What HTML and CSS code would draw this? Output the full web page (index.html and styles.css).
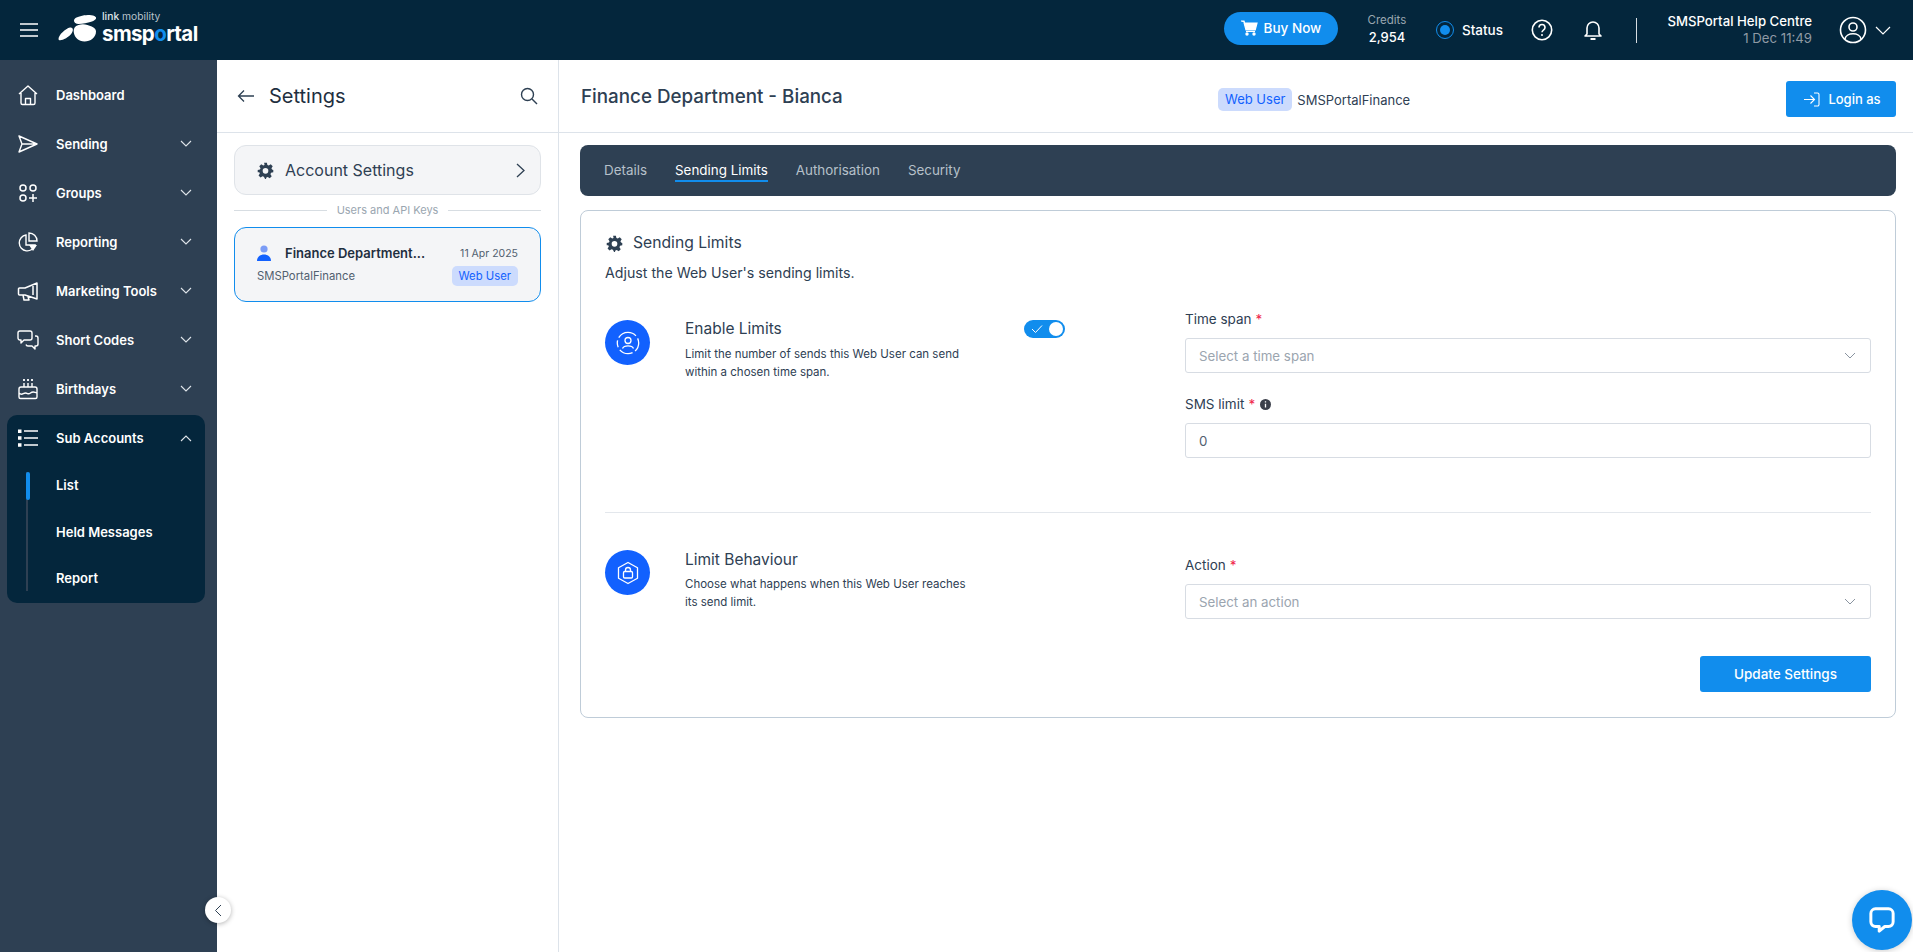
FILE: index.html
```html
<!DOCTYPE html>
<html lang="en">
<head>
<meta charset="utf-8">
<title>Settings</title>
<link rel="stylesheet" href="styles.css">
</head>
<body>
<header class="topbar">
  <svg class="burger" width="18" height="14" viewBox="0 0 18 14"><path d="M0 1h18M0 7h18M0 13h18" stroke="#fff" stroke-width="1.500" fill="none"/></svg>
  <div class="logo">
    <svg class="logo-mark" width="40" height="27" viewBox="0 0 40 27"><path d="M.5 24c0-4 7-10.500 11.500-11.500 3.500-.5 3.500 3 1.500 6-3 4.500-13 9-13 5.500zM17 3.500C20 1 30-1 35 .5c5 1.500 3.500 4.500-1 6-5 1.500-9 2.500-13.500 2.500-3.500 0-6-3-3.500-5.500zM17 12c3-3 8.500-3.500 12.500-2 3.500 1 8.500 2.500 8.500 6.500 0 6-5.500 10-11.500 10-6 0-9.500-4-10.500-8-.5-2.500-.5-4.500 1-6.500z" fill="#fff"/></svg>
    <div class="logo-text">
      <span class="logo-top"><b>link</b> mobility</span>
      <span class="logo-main">smsp<i>o</i>rtal</span>
    </div>
  </div>
  <div class="top-right">
    <button class="buy"><svg width="17" height="16" viewBox="0 0 17 16"><path d="M0 1h3l.6 2H16l-1.800 7H5L3 2.500M5 11.500h9" fill="#fff" stroke="#fff" stroke-width="1.200"/><circle cx="6" cy="14" r="1.700" fill="#fff"/><circle cx="13" cy="14" r="1.700" fill="#fff"/></svg>Buy Now</button>
    <div class="credits"><span>Credits</span><strong>2,954</strong></div>
    <div class="status"><span class="status-dot"><i></i></span>Status</div>
    <svg class="help" width="22" height="22" viewBox="0 0 22 22"><circle cx="11" cy="11" r="9.700" fill="none" stroke="#fff" stroke-width="1.600"/><path d="M8 8.500c0-4 6-4 6 0 0 2.500-3 2.500-3 4.700" fill="none" stroke="#fff" stroke-width="1.600"/><circle cx="11" cy="16" r="1" fill="#fff"/></svg>
    <svg class="bell" width="20" height="22" viewBox="0 0 20 22"><path d="M4 15V9a6 6 0 0 1 12 0v6l2 2H2z" fill="none" stroke="#fff" stroke-width="1.600" stroke-linejoin="round"/><path d="M7.500 20h5" stroke="#fff" stroke-width="2"/></svg>
    <span class="top-div"></span>
    <div class="help-centre"><strong>SMSPortal Help Centre</strong><span>1 Dec 11:49</span></div>
    <svg class="avatar" width="28" height="28" viewBox="0 0 28 28"><circle cx="14" cy="14" r="12.500" fill="none" stroke="#fff" stroke-width="1.600"/><circle cx="14" cy="11" r="4" fill="none" stroke="#fff" stroke-width="1.600"/><path d="M6 23c1-7 15-7 16 0" fill="none" stroke="#fff" stroke-width="1.600"/></svg>
    <svg class="avatar-chev" width="16" height="9" viewBox="0 0 16 9"><path d="M1 1l7 7 7-7" fill="none" stroke="#fff" stroke-width="1.200"/></svg>
  </div>
</header>

<div class="layout">
  <nav class="sidebar">
    <a class="nav-item"><svg width="22" height="22" viewBox="0 0 22 22"><path d="M2 10l9-8 9 8M4 8v11a1.500 1.500 0 0 0 1.500 1.500h11A1.500 1.500 0 0 0 18 19V8M8.500 20.500v-6h5v6" fill="none" stroke="#fff" stroke-width="1.400" stroke-linejoin="round"/></svg><span>Dashboard</span></a>
    <a class="nav-item"><svg width="22" height="22" viewBox="0 0 22 22"><path d="M2 3l18 8-18 8 3-8zM5 11h15" fill="none" stroke="#fff" stroke-width="1.400" stroke-linejoin="round"/></svg><span>Sending</span><svg class="chev" width="12" height="7" viewBox="0 0 12 7"><path d="M1 1l5 5 5-5" fill="none" stroke="#dfe5ea" stroke-width="1.100"/></svg></a>
    <a class="nav-item"><svg width="22" height="22" viewBox="0 0 22 22"><g fill="none" stroke="#fff" stroke-width="1.500"><circle cx="6" cy="6" r="3"/><circle cx="16" cy="6" r="3"/><circle cx="6" cy="16" r="3"/><path d="M16 12v8M12 16h8"/></g></svg><span>Groups</span><svg class="chev" width="12" height="7" viewBox="0 0 12 7"><path d="M1 1l5 5 5-5" fill="none" stroke="#dfe5ea" stroke-width="1.100"/></svg></a>
    <a class="nav-item"><svg width="22" height="22" viewBox="0 0 22 22"><path d="M9 4a8 8 0 1 0 9 10H9z" fill="none" stroke="#fff" stroke-width="1.400"/><path d="M12 2a8 8 0 0 1 8 8h-8z" fill="none" stroke="#fff" stroke-width="1.400"/><path d="M12 14h8l-4 6z" fill="#fff"/></svg><span>Reporting</span><svg class="chev" width="12" height="7" viewBox="0 0 12 7"><path d="M1 1l5 5 5-5" fill="none" stroke="#dfe5ea" stroke-width="1.100"/></svg></a>
    <a class="nav-item"><svg width="22" height="22" viewBox="0 0 22 22"><path d="M20 3v16L8 15H2.500a1 1 0 0 1-1-1V9a1 1 0 0 1 1-1H8zM6 15l1 5h5l-1-3.500M16 6v9" fill="none" stroke="#fff" stroke-width="1.500" stroke-linejoin="round"/></svg><span>Marketing Tools</span><svg class="chev" width="12" height="7" viewBox="0 0 12 7"><path d="M1 1l5 5 5-5" fill="none" stroke="#dfe5ea" stroke-width="1.100"/></svg></a>
    <a class="nav-item"><svg width="22" height="22" viewBox="0 0 22 22"><path d="M3 2h10a2 2 0 0 1 2 2v5a2 2 0 0 1-2 2H7l-3 3v-3H3a2 2 0 0 1-2-2V4a2 2 0 0 1 2-2zM18 7h1a2 2 0 0 1 2 2v6a2 2 0 0 1-2 2h-1v3l-3-3h-4a2 2 0 0 1-2-1.500" fill="none" stroke="#fff" stroke-width="1.400" stroke-linejoin="round"/></svg><span>Short Codes</span><svg class="chev" width="12" height="7" viewBox="0 0 12 7"><path d="M1 1l5 5 5-5" fill="none" stroke="#dfe5ea" stroke-width="1.100"/></svg></a>
    <a class="nav-item"><svg width="22" height="22" viewBox="0 0 22 22"><path d="M4 9h14a2 2 0 0 1 2 2v8a1.500 1.500 0 0 1-1.500 1.500h-15A1.500 1.500 0 0 1 2 19v-8a2 2 0 0 1 2-2zM2 15c3 3 4 0 6.500 0s2.500 2 5 0 3-1 6.500 0M7 5v4M11 5v4M15 5v4" fill="none" stroke="#fff" stroke-width="1.400"/><path d="M7 1v2M11 1v2M15 1v2" stroke="#fff" stroke-width="1.800"/></svg><span>Birthdays</span><svg class="chev" width="12" height="7" viewBox="0 0 12 7"><path d="M1 1l5 5 5-5" fill="none" stroke="#dfe5ea" stroke-width="1.100"/></svg></a>
    <div class="nav-group">
      <a class="nav-item nav-group-head"><svg width="22" height="22" viewBox="0 0 22 22"><path d="M7 4h14M7 11h14M7 18h14" stroke="#fff" stroke-width="1.400"/><path d="M1 2.500h3.500V6H1zM1 9.300h3.500v3.500H1zM1 16.200h3.500v3.500H1z" fill="#fff"/></svg><span>Sub Accounts</span><svg class="chev" width="12" height="7" viewBox="0 0 12 7"><path d="M1 6l5-5 5 5" fill="none" stroke="#dfe5ea" stroke-width="1.100"/></svg></a>
      <div class="sub-list">
        <a class="sub-item active">List</a>
        <a class="sub-item">Held Messages</a>
        <a class="sub-item">Report</a>
      </div>
    </div>
  </nav>

  <aside class="panel">
    <div class="panel-head">
      <svg width="18" height="14" viewBox="0 0 18 14"><path d="M17 7H1.500M7 1.500L1.500 7 7 12.500" fill="none" stroke="#2e4053" stroke-width="1.300"/></svg>
      <h2>Settings</h2>
      <svg class="panel-search" width="18" height="18" viewBox="0 0 18 18"><circle cx="7.500" cy="7.500" r="6" fill="none" stroke="#2e4053" stroke-width="1.400"/><path d="M12 12l5 5" stroke="#2e4053" stroke-width="1.400"/></svg>
    </div>
    <div class="panel-body">
      <div class="account-btn">
        <svg class="gear" width="17" height="17" viewBox="0 0 24 24"><path fill="#2e4053" fill-rule="evenodd" d="M10 1h4l.7 3.200 1.900.8 2.800-1.800 2.800 2.800-1.800 2.800.8 1.900L23 11.400v3.200l-3.200.7-.8 1.900 1.800 2.800-2.800 2.800-2.800-1.800-1.900.8L12.600 24h-1.200l-1.700-3.200-1.900-.8-2.800 1.800-2.800-2.800 1.800-2.800-.8-1.900L1 14.600v-3.200l3.200-.7.800-1.900L3.200 6l2.800-2.800 2.800 1.800 1.900-.8zM12 8.500a4 4 0 1 0 0 8 4 4 0 0 0 0-8z"/></svg>
        <span>Account Settings</span>
        <svg class="account-chev" width="9" height="15" viewBox="0 0 9 15"><path d="M1 1l7 6.500L1 14" fill="none" stroke="#2e4053" stroke-width="1.300"/></svg>
      </div>
      <div class="divider-label"><span>Users and API Keys</span></div>
      <div class="user-card">
        <div class="user-top">
          <svg width="14" height="16" viewBox="0 0 14 16"><circle cx="7" cy="4" r="3.600" fill="#7b9cf6"/><path d="M0 16c0-4 3-6.500 7-6.500s7 2.500 7 6.500z" fill="#1261fe"/></svg>
          <strong>Finance Department...</strong>
          <span class="user-date">11 Apr 2025</span>
        </div>
        <div class="user-bottom">
          <span>SMSPortalFinance</span>
          <em class="badge">Web User</em>
        </div>
      </div>
    </div>
  </aside>

  <main class="main">
    <div class="main-head">
      <h1>Finance Department - Bianca</h1>
      <div class="main-meta"><em class="badge badge-lg">Web User</em><span>SMSPortalFinance</span></div>
      <button class="login-as"><svg width="17" height="15" viewBox="0 0 17 15"><path d="M1 7.500h10M7.500 3.500l4 4-4 4M11 1h3.500a1.500 1.500 0 0 1 1.500 1.500v10a1.500 1.500 0 0 1-1.500 1.500H11" fill="none" stroke="#fff" stroke-width="1.100"/></svg>Login as</button>
    </div>
    <div class="main-body">
      <div class="tabs">
        <a>Details</a>
        <a class="active">Sending Limits</a>
        <a>Authorisation</a>
        <a>Security</a>
      </div>
      <section class="card">
        <h3 class="card-title"><svg width="17" height="17" viewBox="0 0 24 24"><path fill="#2e4053" fill-rule="evenodd" d="M10 1h4l.7 3.200 1.900.8 2.800-1.800 2.800 2.800-1.800 2.800.8 1.900L23 11.400v3.200l-3.200.7-.8 1.900 1.800 2.800-2.800 2.800-2.800-1.800-1.900.8L12.600 24h-1.200l-1.700-3.200-1.900-.8-2.800 1.800-2.800-2.800 1.800-2.800-.8-1.900L1 14.600v-3.200l3.200-.7.800-1.900L3.200 6l2.800-2.800 2.800 1.800 1.900-.8zM12 8.500a4 4 0 1 0 0 8 4 4 0 0 0 0-8z"/></svg>Sending Limits</h3>
        <p class="card-sub">Adjust the Web User's sending limits.</p>

        <div class="form-row">
          <div class="circle-icon"><svg width="24" height="24" viewBox="0 0 24 24"><circle cx="12" cy="12" r="10.700" fill="none" stroke="#fff" stroke-width="1.300" stroke-dasharray="9 3 14 3 7 3 20 3"/><circle cx="12" cy="9.500" r="3" fill="none" stroke="#fff" stroke-width="1.300"/><path d="M6.500 17.500c1.500-3.500 9.500-3.500 11 0" fill="none" stroke="#fff" stroke-width="1.300"/></svg></div>
          <div class="form-info">
            <h4>Enable Limits</h4>
            <p>Limit the number of sends this Web User can send within a chosen time span.</p>
          </div>
          <div class="toggle"><svg width="12" height="10" viewBox="0 0 12 10"><path d="M1 5l3.500 3.500L11 1.500" fill="none" stroke="#fff" stroke-width="1"/></svg><i></i></div>
          <div class="form-fields">
            <label>Time span <b>*</b></label>
            <div class="control"><span class="placeholder">Select a time span</span><svg width="12" height="7" viewBox="0 0 12 7"><path d="M1 1l5 5 5-5" fill="none" stroke="#8a94a0" stroke-width="1"/></svg></div>
            <label class="label-gap">SMS limit <b>*</b> <svg class="info" width="11" height="11" viewBox="0 0 11 11"><circle cx="5.500" cy="5.500" r="5.500" fill="#3b3f4a"/><path d="M5.500 4.800v3.600M5.500 2.300v1.200" stroke="#fff" stroke-width="1.300"/></svg></label>
            <div class="control"><span>0</span></div>
          </div>
        </div>

        <hr class="form-sep">

        <div class="form-row form-row-up">
          <div class="circle-icon"><svg width="24" height="24" viewBox="0 0 24 24"><path d="M12 1.500l9.500 5.300v10.400L12 22.500l-9.500-5.300V6.800z" fill="none" stroke="#fff" stroke-width="1.300" stroke-linejoin="round"/><rect x="7.500" y="10.500" width="9" height="6.500" rx="1.200" fill="none" stroke="#fff" stroke-width="1.300"/><path d="M9.500 10.500V9a2.500 2.500 0 0 1 5 0v1.500" fill="none" stroke="#fff" stroke-width="1.300"/></svg></div>
          <div class="form-info">
            <h4>Limit Behaviour</h4>
            <p>Choose what happens when this Web User reaches its send limit.</p>
          </div>
          <div class="toggle-slot"></div>
          <div class="form-fields">
            <label>Action <b>*</b></label>
            <div class="control"><span class="placeholder">Select an action</span><svg width="12" height="7" viewBox="0 0 12 7"><path d="M1 1l5 5 5-5" fill="none" stroke="#8a94a0" stroke-width="1"/></svg></div>
          </div>
        </div>

        <div class="card-actions"><button class="update">Update Settings</button></div>
      </section>
    </div>
  </main>
</div>

<button class="collapse" aria-label="Collapse"><svg width="8" height="13" viewBox="0 0 8 13"><path d="M7 1L1.500 6.500 7 12" fill="none" stroke="#2e4053" stroke-width="1"/></svg></button>
<button class="chat" aria-label="Chat"><svg width="26" height="26" viewBox="0 0 28 28"><path d="M7 2h14a5 5 0 0 1 5 5v9a5 5 0 0 1-5 5h-4l-6 5v-5H7a5 5 0 0 1-5-5V7a5 5 0 0 1 5-5z" fill="none" stroke="#fff" stroke-width="3.200" stroke-linejoin="round"/></svg></button>
</body>
</html>
```

FILE: styles.css
```css
* { box-sizing: border-box; }
html, body { margin: 0; height: 100%; overflow: hidden; }
body { font-family: "Inter", "Liberation Sans", sans-serif; color: #2e4053; background: #fff; display: flex; flex-direction: column; }
h1, h2, h3, h4, p { margin: 0; font-weight: 400; }
em, i { font-style: normal; }
button { font-family: inherit; border: 0; cursor: pointer; }

.topbar { height: 60px; flex: none; background: #04263c; display: flex; align-items: center; color: #fff; }
.burger { margin-left: 20px; }
.logo { display: flex; align-items: center; margin-left: 20px; margin-bottom: 4px; }
.logo-mark { margin-right: 4px; }
.logo-text { display: flex; flex-direction: column; }
.logo-top { font-size: 10.300px; line-height: 12px; color: #b9c3cb; }
.logo-top b { font-weight: 500; color: #dfe5ea; }
.logo-main { font-size: 20.500px; line-height: 24px; font-weight: 700; letter-spacing: -.6px; }
.logo-main i { color: #118ded; }

.top-right { margin-left: auto; display: flex; align-items: center; }
.buy { width: 114px; height: 33px; margin-bottom: 4px; border-radius: 17px; background: #118ded; color: #fff; font-size: 13.500px; font-weight: 500; display: flex; align-items: center; justify-content: center; gap: 6px; padding: 0; }
.credits { margin-left: 29px; width: 40px; display: flex; flex-direction: column; align-items: center; }
.credits span { font-size: 11.500px; line-height: 14px; color: #9aa6b0; }
.credits strong { font-size: 13px; line-height: 20px; font-weight: 500; }
.status { margin-left: 29px; margin-bottom: 1px; display: flex; align-items: center; font-size: 13.500px; font-weight: 500; }
.status-dot { width: 18px; height: 18px; border: 1.500px solid #118ded; border-radius: 50%; display: flex; align-items: center; justify-content: center; margin-right: 8px; }
.status-dot i { width: 10px; height: 10px; border-radius: 50%; background: #118ded; }
.help { margin-left: 28px; }
.bell { margin-left: 30px; }
.top-div { width: 1px; height: 25px; background: #d7dde2; margin-left: 33px; }
.help-centre { margin-left: 30px; width: 145px; display: flex; flex-direction: column; align-items: flex-end; }
.help-centre strong { font-size: 13.200px; line-height: 17px; font-weight: 500; white-space: nowrap; }
.help-centre span { font-size: 13.200px; line-height: 17px; color: #8f9aa5; }
.avatar { margin-left: 27px; }
.avatar-chev { margin-left: 8px; margin-right: 22px; }

.layout { flex: 1; display: flex; min-height: 0; }
.sidebar { width: 217px; flex: none; background: #2e4053; padding-top: 10px; }
.nav-item { height: 49px; display: flex; align-items: center; padding: 0 25px 0 17px; color: #fff; font-size: 13px; font-weight: 600; }
.nav-item > span { margin-left: 17px; flex: 1; }
.nav-group { margin: 2px 12px 0 7px; height: 188px; background: #04263c; border-radius: 10px; }
.nav-group-head { height: 46px; padding: 0 13px 0 10px; }
.sub-list { margin: 1px 0 0 19px; position: relative; display: flex; flex-direction: column; padding-left: 30px; }
.sub-list::before { content: ""; position: absolute; left: 0; top: 10px; bottom: 11px; width: 2px; background: #2e4053; }
.sub-item { height: 46.500px; display: flex; align-items: center; color: #fff; font-size: 13px; font-weight: 600; position: relative; }
.sub-item.active::before { content: ""; position: absolute; left: -30.500px; top: 10px; width: 4px; height: 28px; border-radius: 2px; background: #118ded; }

.panel { width: 342px; flex: none; border-right: 1px solid #dde3ea; }
.panel-head { height: 73px; border-bottom: 1px solid #dde3ea; display: flex; align-items: center; padding: 0 20px 0 20px; }
.panel-head h2 { font-size: 20px; font-weight: 400; margin-left: 14px; color: #1f2f3f; }
.panel-search { margin-left: auto; }
.panel-body { padding: 12px 17px 0 17px; }
.account-btn { height: 50px; background: #f4f5f7; border: 1px solid #dfe3e8; border-radius: 12px; display: flex; align-items: center; padding: 0 15px 0 22px; font-size: 16px; }
.account-btn span { margin-left: 11px; flex: 1; }
.divider-label { display: flex; align-items: center; gap: 10px; margin-top: 6px; height: 18px; font-size: 11px; color: #9aa6b0; }
.divider-label::before, .divider-label::after { content: ""; flex: 1; height: 1px; background: #d7dde2; }
.user-card { margin-top: 8px; height: 75px; background: #f4f5f7; border: 1px solid #118ded; border-radius: 12px; padding: 15px 22px 0 22px; }
.user-top { display: flex; align-items: center; height: 20px; }
.user-top strong { margin-left: 14px; font-size: 13px; font-weight: 600; flex: 1; color: #1f2f3f; white-space: nowrap; }
.user-date { font-size: 10.500px; color: #51606f; }
.user-bottom { display: flex; justify-content: space-between; align-items: center; margin-top: 3px; font-size: 11.300px; color: #51606f; }
.badge { background: #ccdbfd; color: #1261fe; border-radius: 5px; font-size: 11.300px; height: 20px; line-height: 20px; padding: 0 7px; }
.badge-lg { font-size: 13px; height: 23px; line-height: 23px; padding: 0 7px; }

.main { flex: 1; min-width: 0; }
.main-head { height: 73px; border-bottom: 1px solid #dde3ea; display: flex; align-items: center; padding: 0 17px 0 22px; }
.main-head h1 { font-size: 18.800px; font-weight: 500; color: #2e4053; width: 637px; white-space: nowrap; }
.main-meta { display: flex; align-items: center; gap: 5px; margin-top: 7px; font-size: 13px; }
.login-as { margin-left: auto; margin-top: 6px; width: 110px; height: 36px; border-radius: 3px; background: #118ded; color: #fff; font-size: 13px; font-weight: 500; display: flex; align-items: center; justify-content: center; gap: 8px; padding: 0 0 0 2px; }
.main-body { padding: 12px 17px 0 21px; }
.tabs { height: 51px; background: #2e4053; border-radius: 8px; display: flex; align-items: center; padding-left: 24px; gap: 28px; font-size: 13.400px; color: #b6c0ca; }
.tabs a { height: 23px; line-height: 22px; }
.tabs a.active { color: #fff; border-bottom: 2px solid #118ded; }
.card { margin-top: 14px; height: 508px; border: 1px solid #bfccd8; border-radius: 8px; padding: 20px 24px 0 24px; }
.card-title { display: flex; align-items: center; gap: 10px; font-size: 15.700px; line-height: 24px; padding-left: 1px; }
.card-sub { margin-top: 6px; font-size: 14.200px; line-height: 24px; }
.form-row { display: grid; grid-template-columns: 45px 304px 41px 1fr; column-gap: 35px; margin-top: 24px; }
.form-sep + .form-row { margin-top: 42px; }
.circle-icon { width: 45px; height: 45px; margin-top: 11px; border-radius: 50%; background: #1261fe; display: flex; align-items: center; justify-content: center; }
.form-info { padding-top: 10px; }
.form-info h4 { font-size: 15.500px; line-height: 20px; }
.form-info p { margin-top: 6px; max-width: 282px; font-size: 11.500px; line-height: 18px; }
.form-row-up .circle-icon { margin-top: -5px; }
.form-row-up .form-info { padding-top: 0; margin-top: -5px; }
.form-row-up .form-info p { margin-top: 5px; }
.toggle { width: 41px; height: 18px; margin-top: 11px; border-radius: 9px; background: #118ded; display: flex; align-items: center; justify-content: space-between; padding: 0 2px 0 7px; }
.toggle i { width: 14px; height: 14px; border-radius: 50%; background: #fff; }
.form-fields { margin-left: 85px; min-width: 0; }
.form-fields label { display: flex; align-items: center; gap: 4px; font-size: 13.500px; line-height: 20px; margin-bottom: 9px; }
.form-fields label b { color: #f0284a; font-weight: 400; }
.info { margin-left: 1px; }
.label-gap { margin-top: 21px; }
.control { height: 35px; border: 1px solid #d7dce3; border-radius: 3px; display: flex; align-items: center; justify-content: space-between; padding: 0 14px 0 13px; font-size: 13.300px; color: #51606f; }
.placeholder { color: #9ba5af; }
.form-sep { border: 0; border-top: 1px solid #e3e7ec; margin: 54px 0 0 0; }
.card-actions { display: flex; justify-content: flex-end; margin-top: 37px; }
.update { width: 171px; height: 36px; border-radius: 3px; background: #118ded; color: #fff; font-size: 13.500px; font-weight: 500; }

.collapse { position: fixed; left: 205px; top: 897px; width: 26px; height: 26px; border-radius: 50%; background: #fff; box-shadow: 0 1px 5px rgba(0,0,0,.3); display: flex; align-items: center; justify-content: center; padding: 0; }
.chat { position: fixed; left: 1852px; top: 890px; width: 60px; height: 60px; border-radius: 50%; background: #118ded; display: flex; align-items: center; justify-content: center; padding: 0; box-shadow: 0 1px 6px rgba(0,0,0,.2); }
```
